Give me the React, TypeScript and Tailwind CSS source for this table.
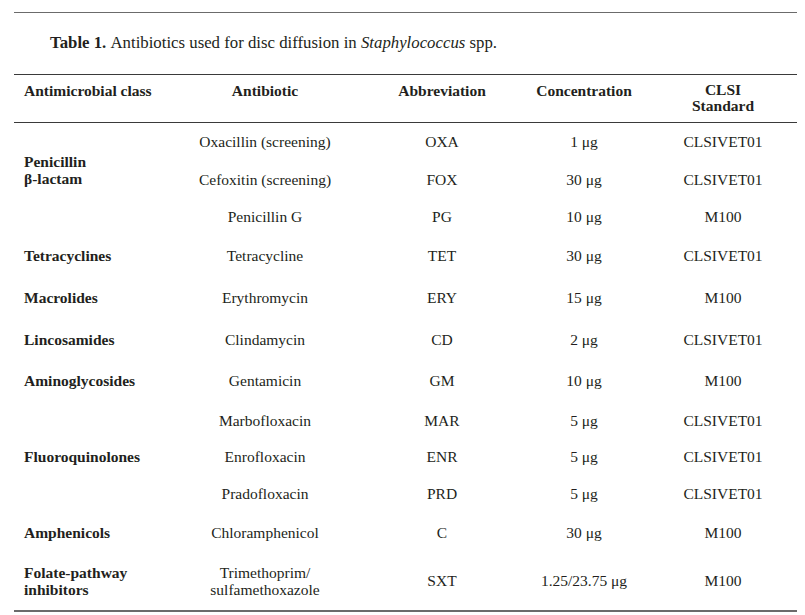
const rows: { cls?: string; drug: string[]; abbr: string; conc: string; std: string; h: string }[] = [
  { drug: ['Oxacillin (screening)'], abbr: 'OXA', conc: '1 μg', std: 'CLSIVET01', h: 'h-[37px]' },
  { drug: ['Cefoxitin (screening)'], abbr: 'FOX', conc: '30 μg', std: 'CLSIVET01', h: 'h-[38px]' },
  { drug: ['Penicillin G'], abbr: 'PG', conc: '10 μg', std: 'M100', h: 'h-[37px]' },
  { cls: 'Tetracyclines', drug: ['Tetracycline'], abbr: 'TET', conc: '30 μg', std: 'CLSIVET01', h: 'h-[40px]' },
  { cls: 'Macrolides', drug: ['Erythromycin'], abbr: 'ERY', conc: '15 μg', std: 'M100', h: 'h-[44px]' },
  { cls: 'Lincosamides', drug: ['Clindamycin'], abbr: 'CD', conc: '2 μg', std: 'CLSIVET01', h: 'h-[40px]' },
  { cls: 'Aminoglycosides', drug: ['Gentamicin'], abbr: 'GM', conc: '10 μg', std: 'M100', h: 'h-[42px]' },
  { drug: ['Marbofloxacin'], abbr: 'MAR', conc: '5 μg', std: 'CLSIVET01', h: 'h-[38px]' },
  { drug: ['Enrofloxacin'], abbr: 'ENR', conc: '5 μg', std: 'CLSIVET01', h: 'h-[34px]' },
  { drug: ['Pradofloxacin'], abbr: 'PRD', conc: '5 μg', std: 'CLSIVET01', h: 'h-[40px]' },
  { cls: 'Amphenicols', drug: ['Chloramphenicol'], abbr: 'C', conc: '30 μg', std: 'M100', h: 'h-[38px]' },
  { cls: 'Folate-pathway\ninhibitors', drug: ['Trimethoprim/', 'sulfamethoxazole'], abbr: 'SXT', conc: '1.25/23.75 μg', std: 'M100', h: 'h-[59px]' },
];

function Cell({ children }: { children: React.ReactNode }) {
  return <div className="flex flex-col items-center justify-center text-center">{children}</div>;
}

export default function App() {
  return (
    <div
      className="w-[805px] h-[615px] bg-white text-[#231f20] text-[15.5px] leading-[17px] overflow-hidden"
      style={{ fontFamily: '"Liberation Serif", "Times New Roman", serif' }}
    >
      <div className="mx-[14px] w-[783px] pt-[12px]">
        <div className="border-t-[1.5px] border-[#6b6b6b]" />
        <div className="h-[61px] pl-[36px] flex items-center pb-[3px] text-[16.8px]">
          <span className="font-bold">Table 1.</span>
          <span>&nbsp;Antibiotics used for disc diffusion in <i>Staphylococcus</i> spp.</span>
        </div>
        <div className="border-t-[1.5px] border-[#3a3a3a]" />

        <div className="grid grid-cols-[151px_200px_154px_130px_148px] h-[47px] pt-[7px] font-bold">
          <div className="pl-[10px]">Antimicrobial class</div>
          <div className="text-center">Antibiotic</div>
          <div className="text-center">Abbreviation</div>
          <div className="text-center">Concentration</div>
          <div className="text-center leading-[16px]">
            CLSI
            <br />
            Standard
          </div>
        </div>
        <div className="border-t-[1.5px] border-[#3a3a3a]" />

        <div className="flex">
          <div className="w-[151px] flex flex-col font-bold">
            <div className="h-[112px] flex flex-col justify-center pl-[10px] pb-[19px]">
              <span>Penicillin</span>
              <span>β-lactam</span>
            </div>
            {rows.slice(3, 7).map((r) => (
              <div key={r.abbr} className={`${r.h} flex items-center pl-[10px]`}>
                {r.cls}
              </div>
            ))}
            <div className="h-[112px] flex items-center pl-[10px] pb-[1px]">Fluoroquinolones</div>
            {rows.slice(10).map((r) => (
              <div key={r.abbr} className={`${r.h} flex flex-col justify-center pl-[10px] whitespace-pre-line`}>
                {r.cls}
              </div>
            ))}
          </div>
          <div className="flex-1 flex flex-col">
            {rows.map((r) => (
              <div key={r.abbr} className={`${r.h} grid grid-cols-[200px_154px_130px_148px]`}>
                <Cell>
                  {r.drug.map((d) => (
                    <span key={d}>{d}</span>
                  ))}
                </Cell>
                <Cell>{r.abbr}</Cell>
                <Cell>{r.conc}</Cell>
                <Cell>{r.std}</Cell>
              </div>
            ))}
          </div>
        </div>
        <div className="border-t-2 border-[#6b6b6b]" />
      </div>
    </div>
  );
}
